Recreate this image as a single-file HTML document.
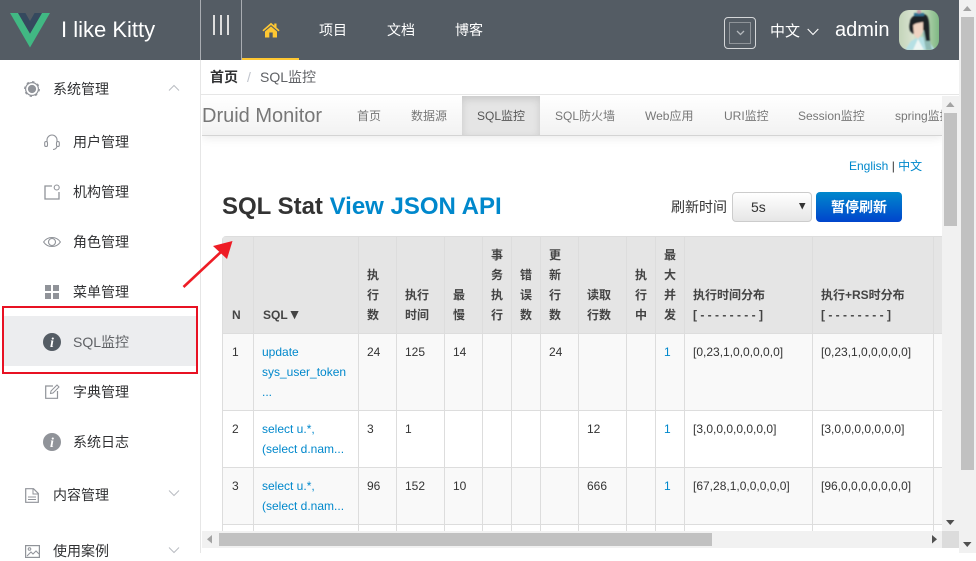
<!DOCTYPE html>
<html lang="zh">
<head>
<meta charset="utf-8">
<title>SQL监控</title>
<style>
*{box-sizing:border-box}
html,body{margin:0;padding:0;width:976px;height:553px;overflow:hidden;background:#fff;font-family:"Liberation Sans","Noto Sans CJK SC",sans-serif;}
.a{position:absolute;white-space:nowrap}
svg{position:absolute;overflow:visible}
#hdr{position:absolute;left:0;top:0;width:959px;height:60px;background:#545c64}
.w{color:#fff}
.nav{font-size:14px;color:#fff;top:20px;line-height:20px}
.mi{font-size:14px;color:#303133;line-height:20px}
.tab{font-size:12px;color:#777;top:106px;line-height:20px}
#tw{position:absolute;left:201px;top:137px;width:741px;height:394px;overflow:hidden}
table{position:absolute;left:21px;top:99px;border-collapse:collapse;table-layout:fixed;width:761px;font-size:12px;line-height:20px;color:#333}
th,td{border:1px solid #ddd;padding:8px;text-align:left;white-space:nowrap;overflow:hidden}
th:first-child,td:first-child{padding-left:9px}
th{background:#e5e5e5;vertical-align:bottom;font-weight:bold;color:#444;height:97px}
td{vertical-align:top;height:57px}
tr.o td{background:#f9f9f9}
a{color:#0088cc;text-decoration:none}
</style>
</head>
<body>
<div id="hdr"></div>
<div class="a" style="left:200px;top:0;width:1px;height:60px;background:#a9adb2"></div>
<div class="a" style="left:241px;top:0;width:1px;height:60px;background:#a9adb2"></div>
<svg style="left:10px;top:12.5px" width="40" height="34.5" viewBox="0 0 256 221"><path d="M204.8 0H256L128 220.8 0 0h51.2L128 132.48 204.8 0z" fill="#41B883"/><path d="M51.2 0L128 132.48 204.8 0h-47.36L128 51.2 98.56 0H51.2z" fill="#35495E"/></svg>
<div class="a w" style="left:61px;top:16px;font-size:22px;line-height:28px">I like Kitty</div>
<div class="a" style="left:213px;top:15px;width:2px;height:20px;background:#ddd"></div>
<div class="a" style="left:220px;top:15px;width:2px;height:20px;background:#ddd"></div>
<div class="a" style="left:227px;top:15px;width:2px;height:20px;background:#ddd"></div>
<div class="a" style="left:242px;top:58px;width:57px;height:2px;background:#ffc832"></div>
<svg style="left:262px;top:22px" width="18" height="16" viewBox="0 0 18 16"><path d="M9 .8 .4 8.2 1.5 9.4 9 3 16.5 9.4 17.6 8.2 14.5 5.5V1.5H12.3V3.6Z" fill="#ffc832"/><path d="M9 4.4 3 9.5V15.5H7.3V10.5H10.7V15.5H15V9.5Z" fill="#ffc832"/></svg>
<div class="a nav" style="left:319px">项目</div>
<div class="a nav" style="left:387px">文档</div>
<div class="a nav" style="left:455px">博客</div>
<div class="a" style="left:724px;top:17px;width:32px;height:32px;border:1px solid #d5d7d9;border-radius:4px"></div>
<div class="a" style="left:729px;top:22px;width:22px;height:22px;border:1px solid #8f9499"></div>
<svg style="left:736px;top:30px" width="9" height="6"><path d="M1 1 4.5 4.5 8 1" fill="none" stroke="#b4b8bc" stroke-width="1.3"/></svg>
<div class="a w" style="left:770px;top:21px;font-size:15px;line-height:22px">中文</div>
<svg style="left:807px;top:28px" width="12" height="8"><path d="M.7 1 6 6.500 11.300 1" fill="none" stroke="#fff" stroke-width="1.100"/></svg>
<div class="a w" style="left:835px;top:17px;font-size:20px;line-height:26px">admin</div>
<svg style="left:899px;top:10px" width="40" height="40" viewBox="0 0 40 40">
<defs><clipPath id="av"><rect width="40" height="40" rx="10"/></clipPath><linearGradient id="ag" x1="0" y1="0" x2="1" y2="0"><stop offset="0" stop-color="#c3d4b9"/><stop offset=".35" stop-color="#d9e3d0"/><stop offset=".75" stop-color="#a9cda5"/><stop offset="1" stop-color="#7fb884"/></linearGradient><filter id="bl"><feGaussianBlur stdDeviation=".7"/></filter></defs>
<g clip-path="url(#av)"><rect width="40" height="40" fill="url(#ag)"/>
<g filter="url(#bl)">
<path d="M6 40 12 31 20 27 27 27 36 40Z" fill="#b5e0e4"/><path d="M14 40 19 29 25 40Z" fill="#eef6f4"/>
<path d="M23 20 29 22 33 40H27Z" fill="#8fb9b3"/>
<path d="M11 12C11 4 27 0 29 8 31 13 30 24 31 31L27 31 25 20 14 24 11 21C10 18 10 15 11 12Z" fill="#1e2026"/>
<path d="M14 14 24 12 24 22 19 29 15 25Z" fill="#efd3c2"/>
<path d="M13 16C15 9 23 6 25 12 21 11 17 13 13 16Z" fill="#1e2026"/>
<rect x="15" y="3" width="10" height="3" fill="#2f6f92"/><circle cx="20" cy="1.500" r="2" fill="#c99aa5"/>
</g></g></svg>

<!-- sidebar -->
<div class="a" style="left:200px;top:60px;width:1px;height:493px;background:#e6e6e6"></div>
<svg style="left:24px;top:81px" width="16" height="16" viewBox="0 0 16 16"><circle cx="8" cy="8" r="6.400" fill="none" stroke="#909399" stroke-width="1.200"/><circle cx="8" cy="8" r="7.300" fill="none" stroke="#909399" stroke-width="1.200" stroke-dasharray="2.400 3.300"/><circle cx="8" cy="8" r="4.100" fill="#909399"/></svg>
<div class="a mi" style="left:53px;top:79px">系统管理</div>
<svg style="left:168px;top:84px" width="12" height="8"><path d="M1 6.500 6 1.500 11 6.500" fill="none" stroke="#b9bcc2" stroke-width="1"/></svg>

<svg style="left:44px;top:134px" width="16" height="17" viewBox="0 0 16 17"><path d="M3 8V6a5 5 0 0 1 10 0V8M13 12c0 2.300-2 3.500-4 3.500" fill="none" stroke="#909399" stroke-width="1.100"/><rect x=".7" y="7.500" width="2.800" height="5" rx="1.400" fill="none" stroke="#909399" stroke-width="1.100"/><rect x="12.500" y="7.500" width="2.800" height="5" rx="1.400" fill="none" stroke="#909399" stroke-width="1.100"/></svg>
<div class="a mi" style="left:73px;top:132px">用户管理</div>

<svg style="left:44px;top:184px" width="16" height="16" viewBox="0 0 16 16"><path d="M8 2H1V15H15V8" fill="none" stroke="#909399" stroke-width="1.300"/><circle cx="12.700" cy="3.500" r="2.500" fill="none" stroke="#909399" stroke-width="1.100"/></svg>
<div class="a mi" style="left:73px;top:182px">机构管理</div>

<svg style="left:43px;top:235px" width="18" height="14" viewBox="0 0 18 14"><path d="M.6 7C4.500 1 13.500 1 17.400 7 13.500 13 4.500 13 .6 7Z" fill="none" stroke="#909399" stroke-width="1.100"/><circle cx="9" cy="7" r="3.500" fill="none" stroke="#909399" stroke-width="1.100"/></svg>
<div class="a mi" style="left:73px;top:232px">角色管理</div>

<svg style="left:45px;top:285px" width="14" height="14"><rect width="6" height="6" fill="#909399"/><rect x="8" width="6" height="6" fill="#909399"/><rect y="8" width="6" height="6" fill="#909399"/><rect x="8" y="8" width="6" height="6" fill="#909399"/></svg>
<div class="a mi" style="left:73px;top:282px">菜单管理</div>

<div class="a" style="left:4px;top:316px;width:192px;height:50px;background:#ecedef"></div>
<div class="a" style="left:2px;top:306px;width:196px;height:68px;border:2px solid #e81123"></div>
<svg style="left:43px;top:333px" width="18" height="18"><circle cx="9" cy="9" r="9" fill="#545c64"/><text x="9" y="14" text-anchor="middle" font-family="Liberation Serif" font-size="14" font-weight="bold" font-style="italic" fill="#fff">i</text></svg>
<div class="a mi" style="left:73px;top:332px;color:#606266">SQL监控</div>

<svg style="left:45px;top:384px" width="15" height="15" viewBox="0 0 15 15"><path d="M8 2H.7V14.300H12.500V7" fill="none" stroke="#909399" stroke-width="1.200"/><path d="M5.500 9.500 6 7 12 1 14 3 8 9Z" fill="none" stroke="#909399" stroke-width="1"/></svg>
<div class="a mi" style="left:73px;top:382px">字典管理</div>

<svg style="left:43px;top:433px" width="18" height="18"><circle cx="9" cy="9" r="9" fill="#909399"/><text x="9" y="14" text-anchor="middle" font-family="Liberation Serif" font-size="14" font-weight="bold" font-style="italic" fill="#fff">i</text></svg>
<div class="a mi" style="left:73px;top:432px">系统日志</div>

<svg style="left:25px;top:488px" width="14" height="15" viewBox="0 0 14 15"><path d="M.7.7H8.500L13.300 5.500V14.300H.7Z" fill="none" stroke="#909399" stroke-width="1.200"/><path d="M8 1V6H13M3 9H11M3 11.500H11" fill="none" stroke="#909399" stroke-width="1"/></svg>
<div class="a mi" style="left:53px;top:485px">内容管理</div>
<svg style="left:168px;top:489px" width="12" height="8"><path d="M1 1.500 6 6.500 11 1.500" fill="none" stroke="#b9bcc2" stroke-width="1"/></svg>

<svg style="left:25px;top:545px" width="15" height="13" viewBox="0 0 15 13"><rect x=".6" y=".6" width="13.800" height="11.800" fill="none" stroke="#909399" stroke-width="1.200"/><circle cx="4.500" cy="4" r="1.300" fill="none" stroke="#909399"/><path d="M2 11 6 7 8 9 11 6 14 9" fill="none" stroke="#909399"/></svg>
<div class="a mi" style="left:53px;top:541px">使用案例</div>
<svg style="left:168px;top:546px" width="12" height="8"><path d="M1 1.500 6 6.500 11 1.500" fill="none" stroke="#b9bcc2" stroke-width="1"/></svg>

<!-- breadcrumb -->
<div class="a" style="left:210px;top:67px;font-size:14px;line-height:20px;font-weight:bold;color:#303133">首页</div>
<div class="a" style="left:247px;top:67px;font-size:14px;line-height:20px;color:#c0c4cc">/</div>
<div class="a" style="left:260px;top:67px;font-size:14px;line-height:20px;color:#606266">SQL监控</div>
<div class="a" style="left:201px;top:94px;width:758px;height:1px;background:#e6e6e6"></div>

<!-- navbar -->
<div class="a" style="left:202px;top:96px;width:740px;height:40px;background:linear-gradient(#fff,#f2f2f2);border-bottom:1px solid #d4d4d4;box-shadow:0 1px 10px rgba(0,0,0,.1);clip-path:inset(0 0 -12px 0)"></div>
<div class="a" style="left:462px;top:96px;width:78px;height:39px;background:#e5e5e5;box-shadow:inset 0 3px 8px rgba(0,0,0,.125)"></div>
<div class="a" style="left:202px;top:103px;font-size:20px;line-height:26px;color:#777">Druid Monitor</div>
<div class="a tab" style="left:357px">首页</div>
<div class="a tab" style="left:411px">数据源</div>
<div class="a tab" style="left:477px;color:#555">SQL监控</div>
<div class="a tab" style="left:555px">SQL防火墙</div>
<div class="a tab" style="left:645px">Web应用</div>
<div class="a tab" style="left:724px">URI监控</div>
<div class="a tab" style="left:798px">Session监控</div>
<div class="a" style="left:895px;top:96px;width:47px;height:39px;overflow:hidden"><span class="a tab" style="left:0;top:10px">spring监控</span></div>

<div class="a" style="left:849px;top:156px;font-size:12px;line-height:20px;color:#333"><a>English</a> | <a>中文</a></div>
<div class="a" style="left:222px;top:189px;font-size:24px;line-height:36px;font-weight:bold;color:#333">SQL Stat <a>View JSON API</a></div>
<div class="a" style="left:671px;top:197px;font-size:14px;line-height:20px;color:#333">刷新时间</div>
<div class="a" style="left:732px;top:192px;width:80px;height:30px;border:1px solid #ccc;border-radius:4px;background:linear-gradient(#fff,#e6e6e6)"></div>
<div class="a" style="left:751px;top:197px;font-size:14px;line-height:20px;color:#333">5s</div>
<svg style="left:799px;top:203px" width="7" height="7"><path d="M0 0H6.500L3.250 6.500Z" fill="#333"/></svg>
<div class="a" style="left:816px;top:192px;width:86px;height:30px;border-radius:4px;background:linear-gradient(#0088cc,#0044cc);color:#fff;font-size:14px;font-weight:bold;line-height:30px;text-align:center">暂停刷新</div>

<!-- table -->
<div id="tw">
<table>
<colgroup><col style="width:31px"><col style="width:105px"><col style="width:38px"><col style="width:48px"><col style="width:38px"><col style="width:29px"><col style="width:29px"><col style="width:38px"><col style="width:48px"><col style="width:29px"><col style="width:29px"><col style="width:128px"><col style="width:121px"><col style="width:60px"></colgroup>
<tr><th>N</th><th><span style="margin-left:1px">SQL</span><span style="font-size:14px">▼</span></th><th>执<br>行<br>数</th><th>执行<br>时间</th><th>最<br>慢</th><th>事<br>务<br>执<br>行</th><th>错<br>误<br>数</th><th>更<br>新<br>行<br>数</th><th>读取<br>行数</th><th>执<br>行<br>中</th><th>最<br>大<br>并<br>发</th><th>执行时间分布<br>[ - - - - - - - - ]</th><th>执行+RS时分布<br>[ - - - - - - - - ]</th><th></th></tr>
<tr class="o" style="height:77px"><td>1</td><td><a>update<br>sys_user_token<br>...</a></td><td>24</td><td>125</td><td>14</td><td></td><td></td><td>24</td><td></td><td></td><td><a>1</a></td><td>[0,23,1,0,0,0,0,0]</td><td>[0,23,1,0,0,0,0,0]</td><td></td></tr>
<tr><td>2</td><td><a>select u.*,<br>(select d.nam...</a></td><td>3</td><td>1</td><td></td><td></td><td></td><td></td><td>12</td><td></td><td><a>1</a></td><td>[3,0,0,0,0,0,0,0]</td><td>[3,0,0,0,0,0,0,0]</td><td></td></tr>
<tr class="o"><td>3</td><td><a>select u.*,<br>(select d.nam...</a></td><td>96</td><td>152</td><td>10</td><td></td><td></td><td></td><td>666</td><td></td><td><a>1</a></td><td>[67,28,1,0,0,0,0,0]</td><td>[96,0,0,0,0,0,0,0]</td><td></td></tr>
<tr><td>&nbsp;</td><td></td><td></td><td></td><td></td><td></td><td></td><td></td><td></td><td></td><td></td><td></td><td></td><td></td></tr>
</table>
</div>
<svg style="left:222px;top:236px" width="4" height="4"><path d="M0 0H4A4 4 0 0 0 0 4Z" fill="#fff"/></svg>

<!-- arrow -->
<svg style="left:0;top:0" width="976" height="553"><path d="M183.500 287 222 251" stroke="#ee1c25" stroke-width="2.600" fill="none"/><path d="M232.500 241 227 259 213 246Z" fill="#ee1c25"/></svg>

<!-- inner scrollbars -->
<div class="a" style="left:942px;top:96px;width:17px;height:435px;background:#f1f1f1"></div>
<div class="a" style="left:944px;top:113px;width:13px;height:113px;background:#c1c1c1"></div>
<svg style="left:946px;top:102px" width="9" height="6"><path d="M0 5H8.500L4.250 0Z" fill="#a3a3a3"/></svg>
<svg style="left:946px;top:520px" width="9" height="6"><path d="M0 0H8.500L4.250 5Z" fill="#505050"/></svg>
<div class="a" style="left:202px;top:531px;width:740px;height:17px;background:#f1f1f1"></div>
<div class="a" style="left:219px;top:533px;width:493px;height:13px;background:#c1c1c1"></div>
<svg style="left:207px;top:535px" width="6" height="9"><path d="M5 0V8.500L0 4.250Z" fill="#a3a3a3"/></svg>
<svg style="left:932px;top:535px" width="6" height="9"><path d="M0 0V8.500L5 4.250Z" fill="#505050"/></svg>
<div class="a" style="left:942px;top:531px;width:17px;height:17px;background:#dcdcdc"></div>

<!-- outer scrollbar -->
<div class="a" style="left:959px;top:0;width:17px;height:553px;background:#f1f1f1"></div>
<div class="a" style="left:961px;top:17px;width:13px;height:453px;background:#c1c1c1"></div>
<svg style="left:963px;top:6px" width="9" height="6"><path d="M0 5H8.500L4.250 0Z" fill="#a3a3a3"/></svg>
<svg style="left:963px;top:542px" width="9" height="6"><path d="M0 0H8.500L4.250 5Z" fill="#505050"/></svg>
</body>
</html>
